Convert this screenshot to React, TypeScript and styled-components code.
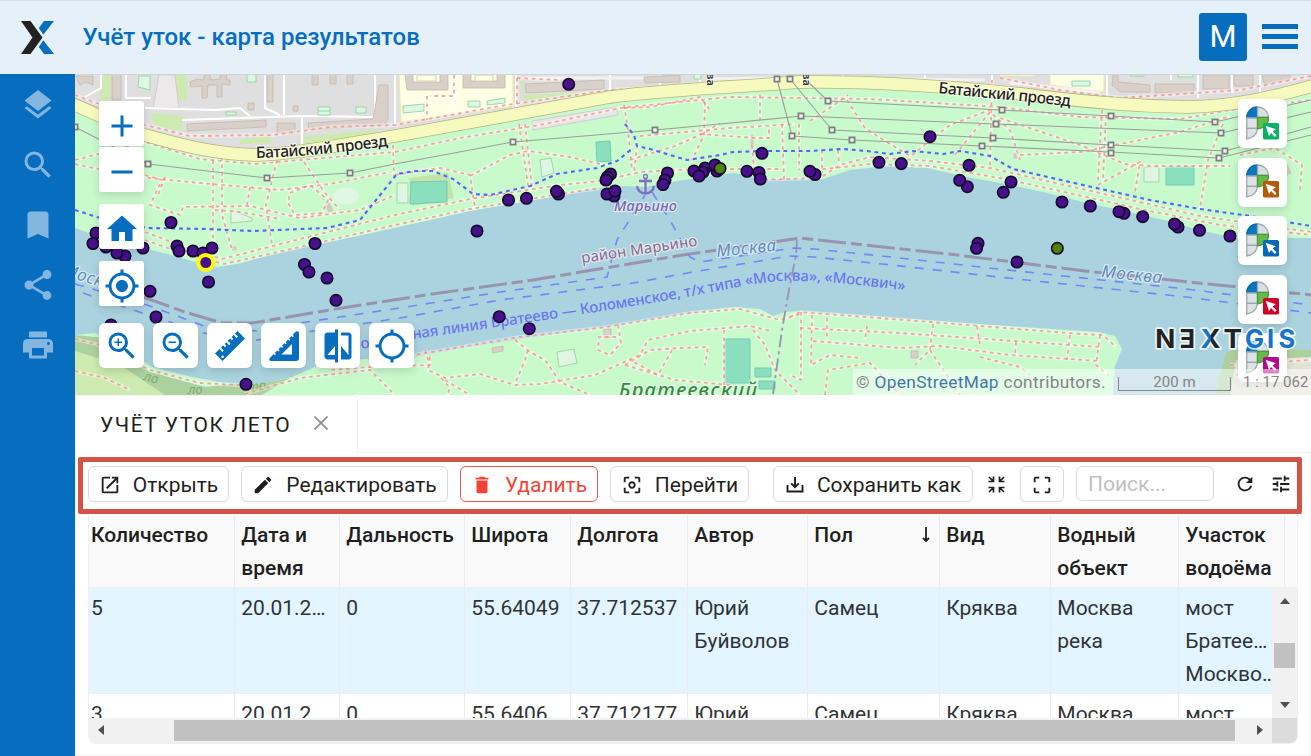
import React from "react";
import styled, { createGlobalStyle } from "styled-components";
import {
  MdAdd, MdBookmark, MdCenterFocusWeak, MdCompare, MdCropFree, MdDelete, MdEdit, MdGpsNotFixed,
  MdHome, MdLaunch, MdLayers, MdMyLocation, MdPrint, MdRefresh, MdRemove, MdSearch, MdShare,
  MdTune, MdZoomIn, MdZoomOut,
} from "react-icons/md";

const BLUE = "#076dbf";

const Global = createGlobalStyle`
  * { box-sizing: border-box; }
  body { margin: 0; font-family: Roboto, "Liberation Sans", sans-serif; color: #1f1f1f; background: #fff; overflow: hidden; }
`;

const Page = styled.div`
  display: flex;
  flex-direction: column;
  width: 1311px;
  height: 756px;
  overflow: hidden;
`;

const Header = styled.header`
  display: flex;
  align-items: center;
  flex: none;
  height: 74px;
  padding: 0 13px 2px 21px;
  background: #e5f0f9;
  border-top: 1px solid #d2dfea;
  > svg { margin-top: 1px; }
`;

const Title = styled.h1`
  flex: 1;
  margin: 0 0 0 28.5px;
  color: ${BLUE};
  font-size: 24px;
  font-weight: 500;
`;

const Avatar = styled.div`
  display: grid;
  place-items: center;
  width: 48px;
  height: 48px;
  margin-right: 15px;
  border-radius: 3px;
  background: ${BLUE};
  color: #fff;
  font-size: 31px;
`;

const Burger = styled.div`
  width: 36px;
  height: 25px;
  border-top: 5px solid ${BLUE};
  border-bottom: 5px solid ${BLUE};
  padding: 5px 0;
  &::before { content: ""; display: block; height: 5px; background: ${BLUE}; }
`;

const Body = styled.div`
  display: flex;
  flex: 1;
  min-height: 0;
`;

const Sidebar = styled.nav`
  display: flex;
  flex-direction: column;
  align-items: center;
  gap: 24px;
  width: 75px;
  padding-top: 12.5px;
  background: ${BLUE};
  color: rgba(255, 255, 255, 0.5);
  font-size: 36px;
  svg { display: block; }
`;

const Main = styled.main`
  display: flex;
  flex-direction: column;
  width: 1236px;
`;

const MapArea = styled.section`
  position: relative;
  flex: none;
  height: 321px;
  overflow: hidden;
  > svg { display: block; }
`;

const LeftControls = styled.div`
  position: absolute;
  left: 24px;
  top: 27px;
  display: flex;
  flex-direction: column;
  gap: 12px;
  button { padding-top: 4px; }
`;

const ZoomGroup = styled.div`
  display: flex;
  flex-direction: column;
  gap: 1px;
`;

const BottomControls = styled.div`
  position: absolute;
  left: 24px;
  top: 249px;
  display: flex;
  gap: 9px;
`;

const MapButton = styled.button<{ $round?: boolean }>`
  display: grid;
  place-items: center;
  width: 45px;
  height: 45px;
  padding: 0;
  border: 0;
  border-radius: ${(p) => (p.$round ? 6 : 3)}px;
  background: #fff;
  color: ${BLUE};
  font-size: 36px;
  box-shadow: 0 3px 9px rgba(0, 0, 0, 0.14);
`;

const RightControls = styled.div`
  position: absolute;
  left: 1163px;
  top: 25px;
  display: flex;
  flex-direction: column;
  gap: 9.5px;
`;

const IdentifyButton = styled(MapButton)`
  width: 49px;
  height: 49px;
  padding-bottom: 2px;
  border-radius: 6px;
`;

const Brand = styled.svg`
  position: absolute;
  left: 1076px;
  top: 250px;
`;

const MapFooter = styled.div`
  position: absolute;
  right: 0;
  bottom: 0;
  display: flex;
  align-items: center;
  width: 458px;
  height: 26px;
  padding: 0 0 1px 3px;
  background: rgba(255, 255, 255, 0.5);
  color: #858585;
  font-size: 15px;
  white-space: nowrap;
`;

const Attribution = styled.div`
  width: 262px;
  font-size: 17.3px;
  letter-spacing: 0.33px;
  span { color: #4477a6; }
`;

const ScaleBar = styled.div`
  width: 113px;
  height: 14px;
  margin-top: 5px;
  border: 1px solid #7f898d;
  border-top: 0;
  line-height: 11px;
  text-align: center;
  letter-spacing: 0.1px;
`;

const ScaleText = styled.div`
  margin-left: 12px;
`;

const Panel = styled.section`
  display: flex;
  flex-direction: column;
  flex: 1;
  min-height: 0;
  border-left: 1px solid #f0f0f0;
  border-bottom: 1px solid #f2f2f2;
`;

const TabStrip = styled.div`
  display: flex;
  flex: none;
  height: 58px;
`;

const Tab = styled.div`
  display: flex;
  align-items: center;
  width: 282px;
  padding-left: 24px;
  border: 1px solid #f0f0f0;
  border-left: 0;
  border-bottom: 0;
  border-radius: 3px 6px 0 0;
  font-size: 21px;
  letter-spacing: 1.55px;
  svg { margin-left: 23px; margin-top: -3px; }
`;

const TabFiller = styled.div`
  flex: 1;
  border-bottom: 1px solid #f0f0f0;
`;

const TabContent = styled.div`
  display: flex;
  flex-direction: column;
  flex: 1;
  min-height: 0;
  padding: 4px 8px 0 2px;
  border-right: 1px solid #f0f0f0;
`;

const Toolbar = styled.div`
  position: relative;
  z-index: 2;
  display: flex;
  align-items: center;
  flex: none;
  width: 1224px;
  height: 57px;
  padding: 0 0 3px 5px;
  border: 5px solid #d35346;
  border-radius: 2px;
`;

const ToolButton = styled.button<{ $w: number; $gap?: number; $danger?: boolean }>`
  display: flex;
  align-items: center;
  justify-content: center;
  gap: 12px;
  flex: none;
  width: ${(p) => p.$w}px;
  height: 36px;
  margin-right: ${(p) => p.$gap ?? 12}px;
  padding: 1px 0 0;
  border: 1px solid ${(p) => (p.$danger ? "#f5564b" : "#dadada")};
  border-radius: 6px;
  background: #fff;
  box-shadow: 0 2px 1px rgba(0, 0, 0, 0.02);
  color: ${(p) => (p.$danger ? "#f44336" : "#1f1f1f")};
  font: 400 21px Roboto, sans-serif;
  svg { font-size: 22px; flex: none; }
`;

const SearchBox = styled.input`
  flex: none;
  width: 138px;
  height: 35px;
  margin: 0 18px 1px 0;
  padding: 0 11px;
  border: 1px solid #d9d9d9;
  border-radius: 6px;
  font: 400 21px Roboto, sans-serif;
  &::placeholder { color: #bfbfbf; opacity: 1; }
`;

const PlainIcon = styled.span<{ $w: number; $gap?: number }>`
  display: grid;
  place-items: center;
  flex: none;
  width: ${(p) => p.$w}px;
  margin-right: ${(p) => p.$gap ?? 0}px;
  font-size: 22px;
`;

const Table = styled.div`
  flex: none;
  width: 1210px;
  height: 229px;
  margin: 1px 0 0 10px;
  border: 1px solid #f0f0f0;
  border-top: 0;
  border-radius: 0 8px 8px 8px;
  overflow: hidden;
  font-size: 21px;
  line-height: 33px;
`;

const columns = "146px 105px 125px 106px 117px 120px 132px 111px 128px 106px 1fr";

const HeadRow = styled.div`
  display: grid;
  grid-template-columns: ${columns};
  height: 73px;
  background: #fafafa;
  border-bottom: 1px solid #f0f0f0;
  font-weight: 500;
`;

const Cell = styled.div<{ $first?: boolean }>`
  display: flex;
  justify-content: space-between;
  padding: 4px 0 0 ${(p) => (p.$first ? 2 : 6.3)}px;
  border-right: 1px solid #ececec;
  overflow: hidden;
  white-space: pre;
`;

const HeadCell = styled(Cell)`
  &:last-child { border-right: 0; }
  svg { margin: 7px 8px 0 0; }
`;

const Viewport = styled.div`
  display: flex;
  height: 130px;
`;

const Rows = styled.div`
  width: 1184px;
  overflow: hidden;
`;

const DataRow = styled.div<{ $selected?: boolean }>`
  display: grid;
  grid-template-columns: ${columns};
  width: 1208px;
  height: 106px;
  border-bottom: 1px solid #f0f0f0;
  background: ${(p) => (p.$selected ? "#e3f6ff" : "#fff")};
  color: #303336;
`;

const VScroll = styled.div`
  display: flex;
  flex-direction: column;
  align-items: center;
  width: 25px;
  padding: 10px 0 10px;
  background: #f1f1f1;
`;

const VThumb = styled.div`
  width: 21px;
  height: 25px;
  margin: 39px 0 auto;
  background: #c1c1c1;
`;

const HScroll = styled.div`
  display: flex;
  align-items: center;
  height: 25px;
  background: #f1f1f1;
`;

const HThumb = styled.div`
  width: 1061px;
  height: 21px;
  margin: 0 22px 1px 70px;
  background: #c1c1c1;
`;

const Corner = styled.div`
  width: 25px;
  height: 25px;
  margin-left: auto;
  background: #dcdcdc;
`;

const Arrow = styled.i<{ $dir: "up" | "down" | "left" | "right" }>`
  width: 0;
  height: 0;
  border: 5.5px solid transparent;
  ${(p) => p.$dir === "up" && "border-top: 0; border-bottom: 6px solid #505050;"}
  ${(p) => p.$dir === "down" && "border-bottom: 0; border-top: 6px solid #505050;"}
  ${(p) => p.$dir === "left" && "border-left: 0; border-right: 6px solid #505050; margin: 0 0 2px 9px;"}
  ${(p) => p.$dir === "right" && "border-right: 0; border-left: 6px solid #505050; margin-bottom: 2px;"}
`;

const BrandMark = () => (
  <svg width="33" height="33" viewBox="0 0 33 33">
    <path d="M0 0H9.5L21.5 16.5 9.5 33H0L11.5 16.5Z" fill="#222" />
    <path d="M23 0H33L22.3 13.8 17.8 7ZM22.3 19.2 33 33H23L17.8 26Z" fill={BLUE} />
  </svg>
);

const RulerIcon = () => (
  <svg width="30" height="30" viewBox="0 0 30 30">
    <path d="M22.6 0 30 7.5 7.5 30 0 22.4Z" fill="currentColor" />
    <path d="M4.3 16.5 8 20.2M8.4 13.2 10.7 15.5M11.2 9.8 14.9 13.5M15.3 6.2 17.6 8.5M18.6 2.6 22.3 6.3" stroke="#fff" strokeWidth="2" />
    <circle cx="7.6" cy="25.8" r="1.2" fill="#fff" />
  </svg>
);

const SetSquareIcon = () => (
  <svg width="30" height="30" viewBox="0 0 30 30">
    <path d="M27 .6Q30-.8 30 2.5V27Q30 30 27 30H2.5Q-1 30 .8 27Z" fill="currentColor" />
    <path d="M12.5 23.5 23 13V23.5Z" fill="#fff" />
    <path d="M4.2 21.4 6.4 23.6M7.8 17.8 10 20M11.4 14.2 13.6 16.4M15 10.6 17.2 12.8M18.6 7 20.8 9.2M22.2 3.4 24.4 5.6" stroke="#fff" strokeWidth="1.6" />
  </svg>
);

const IdentifyIcon = ({ color }: { color: string }) => (
  <svg width="33" height="34" viewBox="0 0 33 34">
    <g strokeWidth="1.3">
      <path d="M11.5 1C5 1 .7 6 .7 12H11.5Z" fill="#0878be" stroke="#086aa8" />
      <path d="M11.5 1C18 1 22.3 6 22.3 11.3H11.5Z" fill="#d9dfe3" stroke="#9fa9b0" />
      <path d="M.7 12H11.5V22.3H.7Z" fill="#dce2e5" stroke="#9fa9b0" />
      <path d="M.7 22.3H11.5C11 28 7 32 .7 33Z" fill="#dce2e5" stroke="#9fa9b0" />
      <path d="M11.5 11.3H22.3C23 17 19 22 11.5 22.8Z" fill="#66b94b" stroke="#4a9a38" />
    </g>
    <rect x="17" y="17" width="16" height="16.5" rx="1.6" fill={color} />
    <path d="M19.7 19.8 29.8 23.3 26.6 25.4 30.5 29.3 28.9 30.9 25.1 27 23 30Z" fill="#fff" />
  </svg>
);

const CollapseIcon = () => (
  <svg width="17" height="17" viewBox="0 0 17 17" fill="none" stroke="currentColor" strokeWidth="1.7">
    <path d="M1 1 5 5M5.5 .5V5.5H.5M16 1 12 5M11.5 .5V5.5H16.5M1 16 5 12M5.5 16.5V11.5H.5M16 16 12 12M11.5 16.5V11.5H16.5" />
  </svg>
);

const SaveIcon = () => (
  <svg width="20" height="18" viewBox="0 0 20 18" fill="none" stroke="currentColor" strokeWidth="1.9">
    <path d="M2.5 9V15.5H17.5V9M10 1V11M6.2 7.4 10 11.2 13.8 7.4" />
  </svg>
);

const SortIcon = () => (
  <svg width="10" height="18" viewBox="0 0 10 18" fill="none" stroke="#1f1f1f" strokeWidth="1.8">
    <path d="M5 1V15M2 12 5 15 8 12" />
  </svg>
);

const shoreNorth =
  "M75 228 100 237 143 248 175 256 198 263 218 267 242 263 262 257 308 246 358 236 390 229 435 219 470 211 557 196 597 188 623 186 645 187 677 181 705 177 733 173 767 179 823 179 850 170 887 166 927 168 967 177 1000 183 1043 192 1083 202 1133 213 1173 222 1195 229 1235 238 1311 238";
const shoreSouth =
  "L1311 395 1218 395 1226 352 1240 348 1311 350 1311 360 1311 395 1113 395 1115 366 1122 349 1115 336 1098 332 949 322 800 311 785 312 773 316 760 309 733 307 683 314 607 327 527 338 457 349 415 357 322 361 315 367 292 377 262 384 225 383 192 377 152 367 110 340 95 333 75 335Z";

const road =
  "M70 103C100 115 120 127 145 135C180 145 215 154 255 155C300 154 350 143 395 136L500 117 610 97C670 89 740 87 800 82C870 81 960 87 1030 95C1090 102 1130 106 1187 107C1235 106 1270 98 1316 85";

const footpaths = [
  "M75 95 110 108 145 125 190 136 273 135 330 127 395 125 500 106 610 90 700 85 830 77",
  "M75 160 145 142 200 159 255 164 300 160 395 152 460 138 540 125 620 108 730 97 870 99 1000 107 1080 117 1180 119 1230 110 1311 100",
  "M75 164 130 176 200 183 280 190 330 184 390 172",
  "M213 153V240L208 257",
  "M222 157V215L232 250",
  "M277 160 266 205 272 245",
  "M304 162 325 193 340 210",
  "M145 175 162 180 150 205 180 215 183 207 250 206 300 218 360 210 395 195",
  "M165 177 158 195M250 187 247 205M215 210 240 212 280 219",
  "M290 193 310 185 328 200 322 213 295 215 288 203Z",
  "M145 232 185 247 222 259 300 239 395 215 470 199 560 185 600 181 640 172 700 169 780 169",
  "M145 240 185 254 224 264 300 247 395 225 470 209 560 194 600 188",
  "M395 175 440 168 470 175 475 208M393 145 394 178",
  "M470 176 510 155 528 151 570 157 605 165",
  "M519 124 528 185M525 124 532 187",
  "M624 105 628 130 632 170M637 145 634 173",
  "M624 108 650 107 700 97 710 110",
  "M705 102 704 135 692 160M760 95V120",
  "M640 136 730 128 795 124",
  "M630 160 675 146 702 134 720 123",
  "M782 124 784 180M799 124V170M822 150V170M838 150 839 165",
  "M700 134 755 138 769 138V128",
  "M752 145 755 180 820 178 840 165 870 157 930 161 990 168 1060 184 1140 202 1200 216 1311 232",
  "M815 170 870 164 930 166 1000 178 1060 191 1140 209 1220 225 1311 235",
  "M847 100 865 128 885 141 912 157",
  "M810 121 840 101 848 95",
  "M912 155 950 125 990 110",
  "M992 80 990 165",
  "M955 155 990 112 1010 130 1020 160",
  "M1000 118 1080 145 1125 164 1150 166 1230 166",
  "M1020 155 1080 152 1180 132 1230 116",
  "M1102 110 1098 180M1106 115 1103 180",
  "M1098 185 1140 162 1135 192",
  "M1223 124 1208 160 1200 208",
  "M1240 155 1275 148 1302 165 1300 190",
  "M402 357 520 337 600 328 690 313 740 309 780 320 800 314",
  "M430 357 428 370 445 378 480 374 515 385 540 384 595 375 640 355 648 340 690 331 750 326 770 331",
  "M515 340 530 352 545 360 560 382 590 395M528 350 525 360 515 384",
  "M618 325 621 343 610 355 598 350 599 337 618 337",
  "M625 365 650 350 680 348 708 347 705 365M625 365 675 380 730 385",
  "M672 350 658 375 630 360",
  "M441 378 450 388 445 400M445 380 470 395",
  "M724 330V395M753 330 765 345 775 370 800 395",
  "M790 317 800 312 930 322 1080 334 1103 335 1116 347",
  "M800 328 900 333 1000 340 1100 347",
  "M801 312 801 380 790 375",
  "M812 315 811 365 830 355 860 358",
  "M827 318V340M867 326 865 340M933 324 930 350 915 365M977 326 980 345M1016 342 1015 355M1070 335 1067 360",
  "M813 341 900 348 940 346 1010 355 1100 361",
  "M825 395 828 370 870 363 900 395M930 350 960 395M980 357 1020 367 1030 375",
  "M1100 335 1096 365 1108 375",
  "M75 339 100 345 150 370 200 383 240 385",
  "M75 371 105 378 130 390",
  "M245 394 300 378 370 370 395 395",
  "M425 350 430 365 370 367 330 370",
  "M1230 365 1311 360M1236 375 1311 378",
  "M454 75V96H430V96M427 96V120M517 78V115M517 78 560 80",
  "M1000 78 1060 90 1120 98 1240 90 1311 76",
];

const buildings = [
  "M76 76H93V85L86 82 80 85Z",
  "M112 74H121V100H112Z",
  "M190 82 197 79 203 80 205 74 210 74 211 80 220 79 221 74 226 74 227 80 230 80V85L222 84 222 97 217 97V85L208 85 207 98 202 98 202 86 191 87Z",
  "M267 74H273V102H267ZM312 74H318V85H312ZM330 74H336V84H330ZM347 74H353V84H347Z",
  "M187 124 266 120V127L187 131ZM277 123H295V133H277Z",
  "M308 123 373 119 379 85H388V119L384 125 309 130Z",
  "M405 74H413V82H440V74H448V90H407ZM463 74H471V81H497V74H505V88H463Z",
  "M525 84 604 80V89L526 93Z",
  "M644 77 680 75V82L645 83Z",
  "M248 103H254V110H248ZM293 106H298V111H293Z",
  "M1113 75H1118V82L1150 85V92H1120L1112 85ZM1155 84H1194V93H1155ZM1203 75H1229V89H1203ZM1234 75H1253V86H1234ZM1262 75H1290L1289 80 1264 84Z",
  "M492 348 503 346V351L493 353ZM604 329H611V338H604ZM911 351H918V358H911Z",
];

const powerLines = [
  "M75 127 112 146 148 164 267 178 350 173 395 164 513 142 655 130 720 124 801 116 996 124 1221 133 1311 112",
  "M777 79 792 136 852 140 982 146 1111 152 1219 158 1311 135",
  "M790 79 832 130 993 138 1111 145 1225 151 1311 127",
  "M807 81 828 101 1002 110 1111 116 1215 122 1311 100",
];
const pylons = [
  [75, 127], [148, 164], [267, 178], [350, 173], [513, 142], [655, 130], [801, 116], [996, 124], [1221, 133],
  [777, 79], [792, 136], [852, 140], [982, 146], [1111, 153], [1219, 158], [790, 79], [832, 130], [993, 138],
  [1111, 145], [1225, 151], [828, 101], [1002, 110], [1111, 116], [1215, 122],
];

const cycleways =
  "M75 210 100 218 147 228 207 229 253 231 327 228 360 220 397 174 415 171 433 171 453 179 473 194 490 195 530 186 557 174 597 168 617 161 633 148M625 124 634 135 637 146 650 149 687 160 720 155 733 152 767 151 810 151 843 149 867 151 890 154 913 151 943 154 960 151 990 156 1013 169 1083 185 1150 200 1200 209 1250 216 1311 226";

const ferries =
  "M75 284 147 305 207 327 257 331 300 323 400 308 500 292 607 277 617 240 645 195M83 293 127 308 203 333 257 340 307 332 400 318 500 300 633 283 693 272 790 256 814 257 882 264 1017 279 1186 297 1311 313M652 192 670 220 690 257 700 262 793 248 814 249 882 256 1017 271 1186 289 1311 305";

const sightings = [
  [171, 222.5], [96, 233], [106, 247], [93, 243.5], [125, 256], [117, 253], [143, 248], [177, 246], [179, 251],
  [193, 251], [203, 253], [212, 248], [208.5, 282], [315, 243.5], [304.5, 264.5], [309, 272], [327, 278],
  [336, 300.3], [150, 291.3], [156, 317], [111, 325], [246, 384.3], [568.7, 84.3], [508.5, 200], [526.5, 198.3],
  [558.5, 194], [556.5, 191.3], [477, 231], [610.5, 174], [607.5, 177], [606, 180], [614, 196], [607, 194],
  [615, 191], [667.5, 173], [665, 180], [663, 184.5], [705, 168], [703, 172], [694, 171], [699, 176], [717, 171],
  [715, 165], [762, 153.3], [747, 171.3], [759, 172.5], [760.3, 179], [815, 174.5], [810, 171.3], [879, 162.3],
  [901.3, 163.6], [930, 136.7], [969, 165.3], [967.3, 186.7], [959.7, 180.3], [1011, 182], [1003.3, 192.3],
  [1062, 202], [1090.3, 206], [1124, 213.3], [1119, 211.7], [1142.7, 216.7], [1178, 227], [1174.5, 224],
  [1199.5, 230.3], [1230, 236], [978, 243.3], [976.5, 248.3], [1017, 262], [499.3, 316.7], [529.3, 328.7],
];

const Basemap = () => (
  <svg width="1236" height="321" viewBox="75 74 1236 321" fontFamily='"Noto Sans", "Open Sans", sans-serif'>
    <defs>
      <path id="ferry-label" d="M413 339C500 327 600 312 686 297C740 287 770 279 800 281C840 282 870 286 920 293" />
      <path id="road-left" d="M256 158C300 157 345 152 396 145" />
      <path id="road-right" d="M938 93C985 98 1025 101 1075 107" />
    </defs>
    <rect x="75" y="74" width="1236" height="321" fill="#c8facc" />
    <path d="M75 74H1311V85C1270 98 1235 106 1187 107C1130 106 960 87 870 81C740 87 670 89 610 97L395 136C300 154 255 155 255 155C215 154 145 135 75 103Z" fill="#e0dfdf" />
    <path d="M399 74H513V106L401 122ZM1050 74H1104V92L1050 85ZM1000 74H1035V76H1000Z" fill="#ffffe5" stroke="#eee9a2" strokeWidth="1" />
    <path d="M176 74H187V100H176ZM100 74H111V100H100ZM152 113 183 116V131L165 129 152 123ZM240 139 270 136 272 143 240 144ZM303 137 380 129 350 140 304 145ZM520 82 524 80V95L604 92 525 102Z" fill="#cdebb0" />
    <path d="M159 75H175L179 108H153Z" fill="#ebe9e9" stroke="#d9c9c7" />
    <path d="M532 121 616 107 618 115 533 130Z" fill="#e9e6e6" stroke="#d0cfcf" />
    <g stroke="#fff" strokeWidth="2" fill="none">
      <path d="M126 74V98H151M101 74V88L83 98M182 120 300 116 375 117V74M265 74V108L280 115M284 74V115M302 117V147M145 108 215 110 240 108 250 116M395 74V125M454 74V108M516 74V112M610 74V95M660 74V90M700 74V90M843 74V82M925 74V84M992 74V90M1107 74V95M1171 74V80M1198 74V98M1232 74V93M1260 74V95" />
    </g>
    <path d="M525 78H660M710 79 830 77M900 79 985 80M1010 83 1100 92" stroke="#f4f1f1" strokeWidth="3" />
    {buildings.map((d) => <path key={d} d={d} fill="#d9d0c9" stroke="#c5b8ad" strokeWidth=".8" />)}
    <path d="M417 75H436V81H417ZM475 75H493V81H475Z" fill="#ffffe5" stroke="#d6ccb6" />
    <g fill="#dff6e2" stroke="#94d9a6">
      <path d="M139 76H150V90L138 87ZM247 74H256V82H247ZM226 112H236V115H226ZM318 107H330V115H318ZM318 111H330M356 107H366V113H356ZM403 106 424 104V111L403 113ZM468 101H480V107H468ZM487 101 505 98V103L487 105ZM1072 81H1090V86H1072ZM1130 74H1144V76H1130ZM1178 74H1193V77H1178ZM694 74H701V79H694Z" />
      <path d="M231 210 252 218V221L231 223ZM397 183H408V203H397ZM540 160 551 158 554 173 542 177ZM557 352 574 349 577 363 559 367ZM1144 167H1159V182H1144Z" stroke="#a5d5aa" />
      <ellipse cx="346" cy="196" rx="13" ry="9" stroke="none" />
    </g>
    <path d="M409 178 448 173 454 198 412 206Z" fill="#c4e3aa" />
    <path d="M411 182 447 181V202L410 204ZM596 142 610 141 611 161 597 162ZM1166 167H1194V185H1166ZM725 339H750V383H725ZM755 368H771V377H755ZM759 381H775V389H759Z" fill="#8adfbe" stroke="#72cbb0" />
    <g stroke="#d9c5c1" fill="#d7c7bd">
      <path d="M325 205 329 203 333 211 329 212ZM232 247H236V250H232ZM751 135H753V150H751ZM1014 154H1017V158H1014ZM1287 164 1291 173 1285 175 1280 170Z" />
    </g>
    <path d="M75 335 105 338 150 372 205 387 250 382 250 395 75 395Z" fill="#add19e" />
    <path d="M75 351 120 365 165 395H75Z" fill="#cdebb0" />
    <g fontSize="13" fill="#7fa878" fontStyle="italic">
      <text x="143" y="380" transform="rotate(15 143 380)">ло</text>
      <text x="188" y="394">ло</text>
    </g>
    <path d={`${shoreNorth} ${shoreSouth}`} fill="#aad3df" />
    <path d="M235 395 255 385 290 378 262 395Z" fill="#add19e" />
    <text x="252" y="391" fontSize="13" fill="#7fa878" fontStyle="italic" transform="rotate(-6 252 391)">по</text>
    <path d="M1226 352 1240 348 1311 350V395H1215Z" fill="#add19e" />
    <path d="M1236 360 1311 357V395H1230Z" fill="#e2e3d5" />
    <g fill="none" strokeLinejoin="round">
      {footpaths.map((d) => <path key={d} d={d} stroke="#fff" strokeOpacity=".4" strokeWidth="3.8" />)}
      {footpaths.map((d) => <path key={"d" + d} d={d} stroke="#fa8a80" strokeOpacity=".75" strokeWidth="1.8" strokeDasharray="3.6 3.8" />)}
      <path d={road} stroke="#b3b57c" strokeWidth="13.4" />
      <path d={road} stroke="#f7fabf" strokeWidth="11.8" />
      {powerLines.map((d) => <path key={d} d={d} stroke="#9b9f99" strokeWidth="1.1" />)}
      <path d={cycleways} stroke="#5862ff" strokeWidth="2.1" strokeDasharray="3.8 3.8" />
      <path d="M143 297 185 312 222 323 252 323 342 308 432 294 533 280 683 255 800 238 949 254 1085 271 1237 287 1311 295" stroke="#9993b2" strokeWidth="3" strokeDasharray="28 5 11 5" />
      <path d="M797 240 796 255 789 290 782 330 773 394" stroke="#9993b2" strokeWidth="1.8" strokeDasharray="13 4 3 4" />
      <path d={ferries} stroke="#7786f5" strokeWidth="1.6" strokeDasharray="9 9" />
    </g>
    {pylons.map(([x, y]) => (
      <rect key={`${x}-${y}`} x={x - 2.6} y={y - 2.6} width="5.2" height="5.2" fill="#f1f1f1" stroke="#7d7d7d" strokeWidth="1.7" />
    ))}
    <g fill="none" stroke="#7b72c4" strokeWidth="2.3">
      <path d="M645.5 178V193M639 181H652M637 186Q638 193 645.5 193.5Q653 193 654 186" />
      <circle cx="645.5" cy="176.5" r="2" strokeWidth="1.3" />
    </g>
    <g stroke="#fff" strokeWidth="2.4" strokeOpacity=".6" paintOrder="stroke" strokeLinejoin="round">
      <g fontSize="15.8" fill="#1f1f1f" fontWeight="500">
        <text><textPath href="#road-left" textLength="133">Батайский проезд</textPath></text>
        <text><textPath href="#road-right" textLength="133">Батайский проезд</textPath></text>
      </g>
      <g fontSize="11" fontWeight="600" fill="#333">
        <text transform="translate(707 73) rotate(90)">ва</text>
        <text transform="translate(803 73) rotate(90)">ва</text>
      </g>
      <text x="614" y="211" fontSize="14.5" fontStyle="italic" fontWeight="500" fill="#7a66b8" textLength="63">Марьино</text>
      <text x="582" y="263" fontSize="15" fill="#8c6688" textLength="117" transform="rotate(-8.5 582 263)">район Марьино</text>
      <g fontSize="17" fontStyle="italic" fill="#5b8cc0">
        <text x="717" y="257" textLength="60" transform="rotate(-6 717 257)">Москва</text>
        <text x="1101" y="277" textLength="61" transform="rotate(6 1101 277)">Москва</text>
        <text x="62" y="275" textLength="60" transform="rotate(17 62 275)">Москва</text>
      </g>
      <text x="619" y="397" fontSize="20" fontStyle="italic" fontWeight="500" fill="#358c3c" textLength="138">Братеевский</text>
    </g>
    <g fontSize="15" fill="#6c76ee" fontWeight="500">
      <text x="352" y="350" transform="rotate(-8 352 350)">рост</text>
      <text><textPath href="#ferry-label" textLength="497">ная линия Братеево — Коломенское, т/х типа «Москва», «Москвич»</textPath></text>
    </g>
    <g fill="#46118b" stroke="#160b2d" strokeWidth="1.7">
      {sightings.map(([x, y], i) => <circle key={i} cx={x} cy={y} r="5.7" />)}
      <circle cx="720" cy="168.5" r="5.7" fill="#4d8407" />
      <circle cx="1057.3" cy="248.3" r="5.7" fill="#4d8407" />
      <circle cx="205.8" cy="262.5" r="7.5" stroke="#ff0" strokeWidth="4" />
    </g>
    <path d="M75 74.5H1311" stroke="#cfd6dc" />
  </svg>
);

const NextGis = () => (
  <Brand width="150" height="32" viewBox="0 0 150 32" fontFamily="Inter, sans-serif" fontWeight="700" fontSize="25.5">
    <defs>
      <linearGradient id="brand-x">
        <stop offset=".48" stopColor="#1673c8" />
        <stop offset=".54" stopColor="#222" />
      </linearGradient>
    </defs>
    <g stroke="#fff" strokeWidth="3.5" strokeOpacity=".8" paintOrder="stroke" strokeLinejoin="round">
      <text x="4.3" y="24" fill="#222" textLength="20" lengthAdjust="spacingAndGlyphs">N</text>
      <text x="28.5" y="24" fill="#222">Ǝ</text>
      <text x="49.5" y="24" fill="url(#brand-x)" textLength="20" lengthAdjust="spacingAndGlyphs">X</text>
      <text x="72.5" y="24" fill="#222" textLength="18.5" lengthAdjust="spacingAndGlyphs">T</text>
      <text x="94" y="24" fill="#1673c8" textLength="19" lengthAdjust="spacingAndGlyphs">G</text>
      <text x="116" y="24" fill="#1673c8">I</text>
      <text x="127.5" y="24" fill="#1673c8">S</text>
    </g>
  </Brand>
);

const heads = ["Количество", "Дата и\nвремя", "Дальность", "Широта", "Долгота", "Автор", "Пол", "Вид", "Водный\nобъект", "Участок\nводоёма", ""];
const rows = [
  ["5", "20.01.2…", "0", "55.64049", "37.712537", "Юрий\nБуйволов", "Самец", "Кряква", "Москва\nрека", "мост\nБратее…\nМоскво…", ""],
  ["3", "20.01.2…", "0", "55.6406", "37.712177", "Юрий", "Самец", "Кряква", "Москва", "мост", ""],
];
const identifyColors = ["#08b267", "#b45a08", "#0769b6", "#ce0428", "#b5078d"];

export default function App() {
  return (
    <Page>
      <Global />
      <Header>
        <BrandMark />
        <Title>Учёт уток - карта результатов</Title>
        <Avatar>M</Avatar>
        <Burger />
      </Header>
      <Body>
        <Sidebar>
          <MdLayers /><MdSearch /><MdBookmark /><MdShare /><MdPrint />
        </Sidebar>
        <Main>
          <MapArea>
            <Basemap />
            <LeftControls>
              <ZoomGroup>
                <MapButton><MdAdd /></MapButton>
                <MapButton><MdRemove /></MapButton>
              </ZoomGroup>
              <MapButton><MdHome /></MapButton>
              <MapButton><MdMyLocation /></MapButton>
            </LeftControls>
            <BottomControls>
              <MapButton $round><MdZoomIn /></MapButton>
              <MapButton $round><MdZoomOut /></MapButton>
              <MapButton $round><RulerIcon /></MapButton>
              <MapButton $round><SetSquareIcon /></MapButton>
              <MapButton $round><MdCompare /></MapButton>
              <MapButton $round><MdGpsNotFixed /></MapButton>
            </BottomControls>
            <RightControls>
              {identifyColors.map((c) => <IdentifyButton key={c}><IdentifyIcon color={c} /></IdentifyButton>)}
            </RightControls>
            <MapFooter>
              <Attribution>© <span>OpenStreetMap</span> contributors.</Attribution>
              <ScaleBar>200 m</ScaleBar>
              <ScaleText>1 : 17 062</ScaleText>
            </MapFooter>
            <NextGis />
          </MapArea>
          <Panel>
            <TabStrip>
              <Tab>
                УЧЁТ УТОК ЛЕТО
                <svg width="14" height="14" viewBox="0 0 14 14" stroke="#8c8c8c" strokeWidth="1.6"><path d="M.5.5 13.5 13.5M13.5.5.5 13.5" /></svg>
              </Tab>
              <TabFiller />
            </TabStrip>
            <TabContent>
              <Toolbar>
                <ToolButton $w={141}><MdLaunch />Открыть</ToolButton>
                <ToolButton $w={207}><MdEdit />Редактировать</ToolButton>
                <ToolButton $w={138} $danger><MdDelete />Удалить</ToolButton>
                <ToolButton $w={139} $gap={24}><MdCenterFocusWeak />Перейти</ToolButton>
                <ToolButton $w={200}><SaveIcon />Сохранить как</ToolButton>
                <PlainIcon $w={23} $gap={12}><CollapseIcon /></PlainIcon>
                <ToolButton $w={44}><MdCropFree /></ToolButton>
                <SearchBox placeholder="Поиск..." />
                <PlainIcon $w={25}><MdRefresh /></PlainIcon>
                <PlainIcon $w={47}><MdTune /></PlainIcon>
              </Toolbar>
              <Table>
                <HeadRow>
                  {heads.map((h, i) => <HeadCell key={i} $first={i === 0}>{h}{h === "Пол" && <SortIcon />}</HeadCell>)}
                </HeadRow>
                <Viewport>
                  <Rows>
                    {rows.map((r, i) => (
                      <DataRow key={i} $selected={i === 0}>
                        {r.map((c, j) => <Cell key={j} $first={j === 0}>{c}</Cell>)}
                      </DataRow>
                    ))}
                  </Rows>
                  <VScroll><Arrow $dir="up" /><VThumb /><Arrow $dir="down" /></VScroll>
                </Viewport>
                <HScroll>
                  <Arrow $dir="left" /><HThumb /><Arrow $dir="right" /><Corner />
                </HScroll>
              </Table>
            </TabContent>
          </Panel>
        </Main>
      </Body>
    </Page>
  );
}
